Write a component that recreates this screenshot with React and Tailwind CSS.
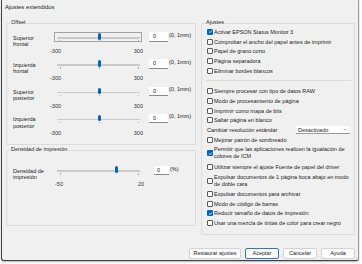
import { Fragment } from 'react';

// ajustes extendidos (driver EPSON)
const offsetRows = [
  ['Superior', 'frontal', true],
  ['Izquierda', 'frontal', false],
  ['Superior', 'posterior', false],
  ['Izquierda', 'posterior', false],
];

const ajustesTop = [
  ['Activar EPSON Status Monitor 3', true],
  ['Comprobar el ancho del papel antes de imprimir', false],
  ['Papel de grano corto', false],
  ['Página separadora', false],
  ['Eliminar bordes blancos', false],
];

function Check({ checked }) {
  if (checked) {
    return (
      <span className="w-[6px] h-[6px] rounded-[1px] bg-[#0067c0] flex items-center justify-center shrink-0">
        <svg viewBox="0 0 6 6" className="w-[5px] h-[5px]">
          <path d="M1.1 3.1 L2.5 4.4 L4.9 1.6" stroke="white" strokeWidth="0.9" fill="none" />
        </svg>
      </span>
    );
  }
  return <span className="w-[6px] h-[6px] rounded-[1px] border-[0.8px] border-[#5a5a5a] bg-[#fbfbfb] shrink-0" />;
}

function CheckRow({ label, checked }) {
  return (
    <div className="h-[9.7px] flex items-center gap-[1px] whitespace-nowrap">
      <Check checked={checked} />
      <span className="leading-[6px]">{label}</span>
    </div>
  );
}

function CheckRow2({ lines, checked }) {
  return (
    <div className="h-[17.5px] flex items-center gap-[1px] whitespace-nowrap">
      <Check checked={checked} />
      <span className="leading-[7px]">
        {lines[0]}
        <br />
        {lines[1]}
      </span>
    </div>
  );
}

// pista del control deslizante; la posicion del pulgar sale del valor
function Slider({ value, min, max, focus, ticks }) {
  const pos = 3 + ((value - min) / (max - min)) * 83;
  return (
    <div className={`relative w-[88px] h-[10px] shrink-0 border ${focus ? 'border-[#a3a3a3]' : 'border-transparent'}`}>
      <div className="absolute left-[2px] right-[1px] top-[4px] h-[1.5px] bg-[#c9c9c9] rounded-full" />
      {ticks.map((t) => (
        <div key={t} className="absolute top-[7px] w-[1px] h-[1.5px] bg-[#b0b0b0]" style={{ left: t }} />
      ))}
      <div
        className="absolute top-[0px] w-[3px] h-[6.5px] rounded-[1.5px] bg-[#0067c0]"
        style={{ left: pos - 2 }}
      />
    </div>
  );
}

function Group({ title, className, children }) {
  return (
    <div className={`relative border border-[#dcdcdc] rounded-[1px] ${className}`}>
      <span className="absolute -top-[5px] left-[3px] px-[1px] bg-[#f0f0f0] leading-[6px] text-[#262626]">{title}</span>
      {children}
    </div>
  );
}

function Btn({ children, primary, w }) {
  return (
    <div
      className={`${w} h-[11px] flex items-center justify-center rounded-[2px] bg-[#fdfdfd] border ${
        primary ? 'border-[#2a78d0]' : 'border-[#d2d2d2]'
      }`}
    >
      {children}
    </div>
  );
}

export default function App() {
  return (
    <div className="w-[362px] h-[264px] bg-white overflow-hidden font-['Liberation_Sans',Arial,sans-serif] text-[5.5px] text-[#1b1b1b]">
      <div className="ml-[1px] w-[358px] h-[261px] bg-[#f0f0f0] border border-t-0 border-l-[#3f3f3f] border-b-[#3f3f3f] border-r-[#9a9a9a] rounded-b-[3px] shadow-[0_1px_2px_rgba(0,0,0,0.3)]">
        {/* titulo */}
        <div className="h-[14px] pl-[3px] pt-[4px] leading-[6px] text-[5.9px]">Ajustes extendidos</div>

        <div className="flex gap-[5px] pl-[4px] mt-[9px]">
          {/* columna izquierda */}
          <div className="w-[190px] flex flex-col gap-[5px]">
            <Group title="Offset" className="h-[122px] pt-[7px] pl-[6px]">
              {offsetRows.map(([a, b, focus], i) => (
                <div key={i} className="h-[27.3px] flex items-start">
                  <div className="w-[41px] pt-[3.5px] leading-[6.2px]">
                    {a}
                    <br />
                    {b}
                  </div>
                  <div className="mt-[1px]">
                    <Slider value={0} min={-300} max={300} focus={focus} ticks={[5, 44, 83]} />
                    <div className="-ml-[4px] w-[93px] mt-[6px] flex justify-between leading-[6px] text-[#333]">
                      <span>-300</span>
                      <span>300</span>
                    </div>
                  </div>
                  <div className="ml-[6px] mt-[1px] w-[19px] h-[9.5px] bg-white border-b border-[#8a8a8a] pl-[4px] leading-[9px]">0</div>
                  <span className="ml-[1px] mt-[0.5px] leading-[6px] whitespace-nowrap">(0, 1mm)</span>
                </div>
              ))}
            </Group>

            <Group title="Densidad de impresión" className="h-[76px] pt-[13px] pl-[6px]">
              <div className="flex items-start">
                <div className="w-[41px] pt-[3.5px] leading-[6.2px]">
                  Densidad de
                  <br />
                  impresión
                </div>
                <div className="mt-[1px]">
                  <Slider value={0} min={-50} max={20} ticks={[5, 83]} />
                  <div className="ml-[1px] w-[89px] mt-[6px] flex justify-between leading-[6px] text-[#333]">
                    <span>-50</span>
                    <span>20</span>
                  </div>
                </div>
                <div className="ml-[10px] mt-[1.5px] w-[15px] h-[9.5px] bg-white border-b border-[#8a8a8a] pl-[3px] leading-[9px]">0</div>
                <span className="ml-[1px] mt-[2px] leading-[6px]">(%)</span>
              </div>
            </Group>
          </div>

          {/* columna derecha */}
          <Group title="Ajustes" className="w-[154px] h-[212px] pt-[3px] pl-[5px] pr-[3px]">
            {ajustesTop.map(([t, c]) => (
              <CheckRow key={t} label={t} checked={c} />
            ))}
            <div className="ml-[-1px] my-[5px] h-[1px] bg-[#dcdcdc]" />
            <CheckRow label="Siempre procesar con tipo de datos RAW" />
            <CheckRow label="Modo de procesamiento de página" />
            <CheckRow label="Imprimir como mapa de bits" />
            <CheckRow label="Saltar página en blanco" />
            <div className="h-[9.7px] flex items-center justify-between pr-[1px]">
              <span className="leading-[6px]">Cambiar resolución estándar</span>
              <div className="w-[54px] h-[8.5px] bg-white border-b border-[#9a9a9a] flex items-center justify-between pl-[2px] pr-[3px]">
                <span className="leading-[6px]">Desactivado</span>
                <svg viewBox="0 0 6 4" className="w-[4px] h-[3px]">
                  <path d="M0.8 0.8 L3 3 L5.2 0.8" stroke="#555" strokeWidth="0.7" fill="none" />
                </svg>
              </div>
            </div>
            <CheckRow label="Mejorar patrón de sombreado" />
            <CheckRow2 lines={['Permitir que las aplicaciones realicen la igualación de', 'colores de ICM']} checked />
            <CheckRow label="Utilizar siempre el ajuste Fuente de papel del driver" />
            <CheckRow2 lines={['Expulsar documentos de 1 página boca abajo en modo', 'de doble cara']} />
            <CheckRow label="Expulsar documentos para archivar" />
            <CheckRow label="Modo de código de barras" />
            <CheckRow label="Reducir tamaño de datos de impresión" checked />
            <CheckRow label="Usar una mezcla de tintas de color para crear negro" />
          </Group>
        </div>

        {/* botones */}
        <div className="flex justify-end gap-[4px] pr-[3px] mt-[13px]">
          {[
            ['Restaurar ajustes', 'w-[52px]', false],
            ['Aceptar', 'w-[34px]', true],
            ['Cancelar', 'w-[34px]', false],
            ['Ayuda', 'w-[34px]', false],
          ].map(([t, w, p]) => (
            <Fragment key={t}>
              <Btn w={w} primary={p}>
                {t}
              </Btn>
            </Fragment>
          ))}
        </div>
      </div>
    </div>
  );
}
